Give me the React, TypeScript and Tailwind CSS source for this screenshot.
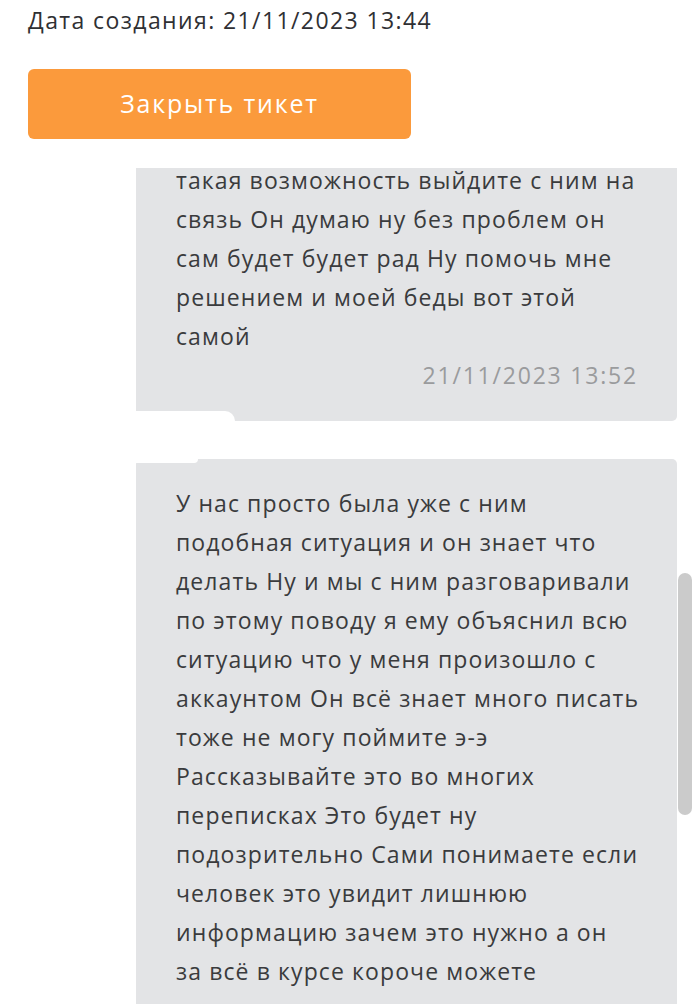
const first = [
  "такая возможность выйдите с ним на",
  "связь Он думаю ну без проблем он",
  "сам будет будет рад Ну помочь мне",
  "решением и моей беды вот этой",
  "самой",
];

const second = [
  "У нас просто была уже с ним",
  "подобная ситуация и он знает что",
  "делать Ну и мы с ним разговаривали",
  "по этому поводу я ему объяснил всю",
  "ситуацию что у меня произошло с",
  "аккаунтом Он всё знает много писать",
  "тоже не могу поймите э-э",
  "Рассказывайте это во многих",
  "переписках Это будет ну",
  "подозрительно Сами понимаете если",
  "человек это увидит лишнюю",
  "информацию зачем это нужно а он",
  "за всё в курсе короче можете",
  "",
];

function Lines({ lines }: { lines: string[] }) {
  return (
    <div className="text-[23px] leading-[39px] tracking-[1.1px] text-[#3a3b3d]">
      {lines.map((l, i) => (
        <div key={i} className="whitespace-nowrap h-[39px]">
          {l}
        </div>
      ))}
    </div>
  );
}

export default function App() {
  return (
    <div
      className="w-[699px] h-[1004px] bg-white overflow-hidden flex flex-col"
      style={{ fontFamily: '"Open Sans", "Noto Sans", sans-serif' }}
    >
      <div className="pl-[28px] pt-[4px] h-[69px] text-[23px] leading-[32px] tracking-[1.4px] text-[#2f3033]">
        Дата создания: 21/11/2023 13:44
      </div>
      <div className="pl-[28px]">
        <button className="w-[383px] h-[70px] rounded-[6px] bg-[#fb9a3c] text-white text-[25px] tracking-[1.8px]">
          Закрыть тикет
        </button>
      </div>

      <div className="relative mt-[29px] flex-1 overflow-hidden">
        <div className="-mt-[25px] flex flex-col gap-[38px] pl-[136px] pr-[22px]">
          <div className="relative bg-[#e3e4e6] rounded-b-[5px] pl-[40px] pr-[39px] pt-[18px] pb-[31px]">
            <Lines lines={first} />
            <div className="text-right text-[23px] leading-[30px] mt-[4px] tracking-[1.8px] text-[#9a9b9d]">
              21/11/2023 13:52
            </div>
            <div className="absolute left-0 bottom-0 w-[99px] h-[10px] bg-white rounded-tr-[14px]" />
          </div>

          <div className="relative bg-[#e3e4e6] rounded-t-[5px] pl-[40px] pr-[39px] pt-[25px]">
            <div className="absolute left-0 top-0 w-[62px] h-[4px] bg-white rounded-br-[10px]" />
            <Lines lines={second} />
          </div>
        </div>

        <div className="absolute left-[678px] top-[405px] w-[14px] h-[242px] rounded-full bg-[#cbcbcb]" />
      </div>
    </div>
  );
}
